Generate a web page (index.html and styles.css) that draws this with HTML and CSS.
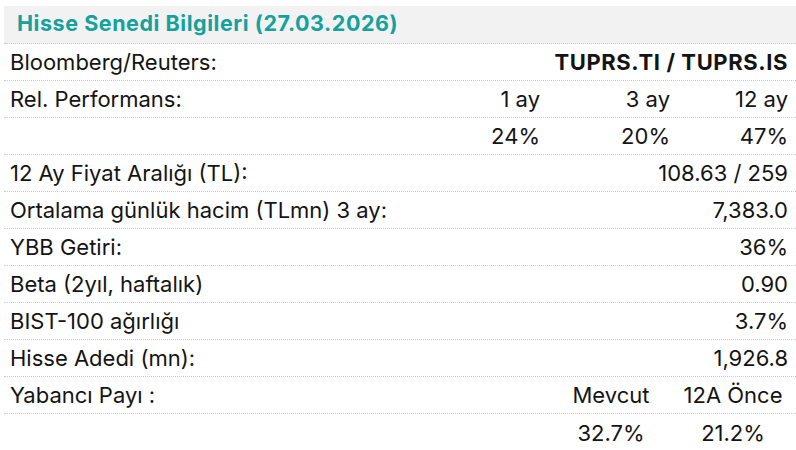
FILE: index.html
```html
<!DOCTYPE html>
<html lang="tr">
<head>
<meta charset="utf-8">
<link rel="stylesheet" href="styles.css">
</head>
<body>
<div class="card">
  <div class="head">Hisse Senedi Bilgileri (27.03.2026)</div>
  <div class="row wide"><span class="label">Bloomberg/Reuters:</span><span class="val bold">TUPRS.TI / TUPRS.IS</span></div>
  <div class="row perf"><span class="label">Rel. Performans:</span><span class="val">1 ay</span><span class="val">3 ay</span><span class="val">12 ay</span></div>
  <div class="row perf"><span class="label"></span><span class="val">24%</span><span class="val">20%</span><span class="val">47%</span></div>
  <div class="row wide"><span class="label">12 Ay Fiyat Aralığı (TL):</span><span class="val">108.63 / 259</span></div>
  <div class="row wide"><span class="label">Ortalama günlük hacim (TLmn) 3 ay:</span><span class="val">7,383.0</span></div>
  <div class="row wide"><span class="label">YBB Getiri:</span><span class="val">36%</span></div>
  <div class="row wide"><span class="label">Beta (2yıl, haftalık)</span><span class="val">0.90</span></div>
  <div class="row wide"><span class="label">BIST-100 ağırlığı</span><span class="val">3.7%</span></div>
  <div class="row wide"><span class="label">Hisse Adedi (mn):</span><span class="val">1,926.8</span></div>
  <div class="row share"><span class="label">Yabancı Payı :</span><span class="val">Mevcut</span><span class="val">12A Önce</span></div>
  <div class="row share last"><span class="label"></span><span class="val">32.7%</span><span class="val">21.2%</span></div>
</div>
</body>
</html>
```
FILE: styles.css
```css
html, body {
  margin: 0;
  padding: 0;
  background: #ffffff;
}
body {
  font-family: "Inter", "Liberation Sans", sans-serif;
  color: #141414;
}
.card {
  margin: 6px 0 0 4px;
  width: 792px;
}
.head {
  height: 38px;
  box-sizing: border-box;
  background: #f2f2f2;
  border-bottom: 1px dotted #cccccc;
  color: #15a19d;
  font-weight: 700;
  font-size: 21.5px;
  letter-spacing: 0.55px;
  line-height: 34px;
  padding-left: 13px;
}
.row {
  display: grid;
  height: 37px;
  box-sizing: border-box;
  border-bottom: 1px dotted #cccccc;
  font-size: 22px;
  line-height: 36px;
  padding: 0 8px 0 6px;
  align-items: center;
}
.row.last {
  border-bottom: none;
}
.wide {
  grid-template-columns: 1fr auto;
}
.perf {
  grid-template-columns: 1fr 130px 130px 118px;
}
.perf .val, .wide .val {
  text-align: right;
}
.share {
  grid-template-columns: 1fr 110px 110px;
  column-gap: 12px;
}
.share .val {
  text-align: center;
}
.label {
  white-space: nowrap;
}
.bold {
  font-weight: 700;
  letter-spacing: 0.6px;
}
```
